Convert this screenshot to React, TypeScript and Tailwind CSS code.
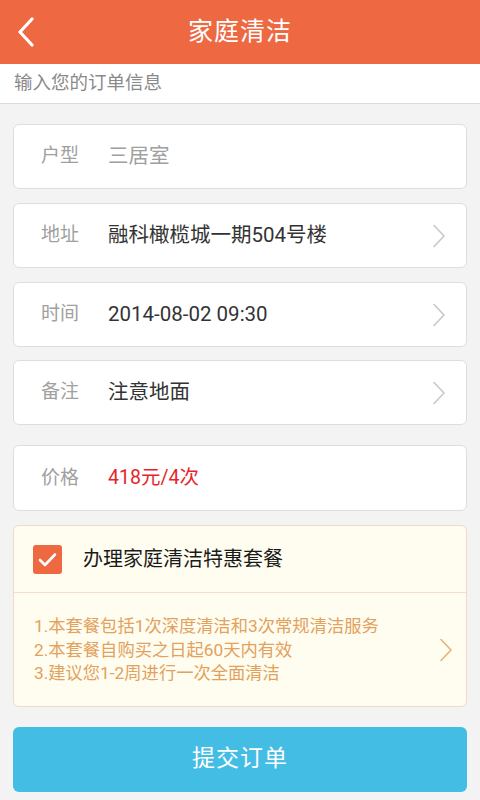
import React from "react";

const font = { fontFamily: 'Roboto, "Noto Sans CJK SC", "Noto Sans", sans-serif' };

function Chevron({ color = "#c8c8c8" }: { color?: string }) {
  return (
    <svg width="14" height="24" viewBox="0 0 14 24" fill="none">
      <polyline points="2,1.5 12,12 2,22.5" stroke={color} strokeWidth="1.6" strokeLinecap="round" strokeLinejoin="round" />
    </svg>
  );
}

type Row = { label: string; value: string; valueClass: string; arrow: boolean };

const rows: Row[] = [
  { label: "户型", value: "三居室", valueClass: "text-[#a0a0a0]", arrow: false },
  { label: "地址", value: "融科橄榄城一期504号楼", valueClass: "text-[#333333]", arrow: true },
  { label: "时间", value: "2014-08-02 09:30", valueClass: "text-[#333333]", arrow: true },
  { label: "备注", value: "注意地面", valueClass: "text-[#333333]", arrow: true },
];

function InfoCard({ row, className = "" }: { row: Row; className?: string }) {
  return (
    <div className={`flex items-center h-[65px] bg-white border border-[#dedede] rounded-[6px] pl-[27px] pr-[20px] ${className}`}>
      <span className="text-[19px] text-[#a0a0a0] w-[67px] shrink-0">{row.label}</span>
      <span className={`flex-1 text-[20.5px] ${row.valueClass}`}>{row.value}</span>
      {row.arrow && <Chevron />}
    </div>
  );
}

export default function App() {
  return (
    <div className="w-[480px] h-[800px] bg-[#f3f3f3] overflow-hidden flex flex-col" style={font}>
      {/* title bar */}
      <div className="relative h-[64px] bg-[#ee6842] flex items-center justify-center shrink-0">
        <svg className="absolute left-[16px] top-[17px]" width="20" height="30" viewBox="0 0 20 30" fill="none">
          <polyline points="16,2 4,15 16,28" stroke="white" strokeWidth="3.2" strokeLinecap="round" strokeLinejoin="round" />
        </svg>
        <span className="text-white text-[25px] tracking-[1px]">家庭清洁</span>
      </div>

      <div className="h-[40px] bg-white border-b border-[#dcdcdc] flex items-center px-[14px] shrink-0">
        <span className="text-[18.5px] text-[#8a8a8a]">输入您的订单信息</span>
      </div>

      <div className="flex flex-col px-[13px] pt-[20px]">
        <InfoCard row={rows[0]} />
        <InfoCard row={rows[1]} className="mt-[14px]" />
        <InfoCard row={rows[2]} className="mt-[14px]" />
        <InfoCard row={rows[3]} className="mt-[13px]" />

        <div className="flex items-center h-[66px] bg-white border border-[#dedede] rounded-[6px] pl-[27px] pr-[20px] mt-[20px]">
          <span className="text-[19px] text-[#a0a0a0] w-[67px] shrink-0">价格</span>
          <span className="text-[19.5px] text-[#e5252a]">418元/4次</span>
        </div>

        <div className="mt-[14px] bg-[#fffdf0] border border-[#f5d9c8] rounded-[6px] flex flex-col">
          <div className="h-[67px] flex items-center pl-[19px] border-b border-[#f5dcc8]">
            <div className="w-[29px] h-[29px] rounded-[3px] bg-[#ee6842] flex items-center justify-center">
              <svg width="19" height="15" viewBox="0 0 19 15" fill="none">
                <polyline points="2,8 7,13 17,2.5" stroke="white" strokeWidth="2.6" strokeLinecap="round" strokeLinejoin="round" />
              </svg>
            </div>
            <span className="ml-[21px] text-[20px] text-[#1a1a1a]">办理家庭清洁特惠套餐</span>
          </div>
          <div className="h-[113px] flex items-center pl-[20px] pr-[13px]">
            <div className="flex-1 flex flex-col text-[17.3px] leading-[23.5px] text-[#e3a15e] pt-[2px]">
              <span>1.本套餐包括1次深度清洁和3次常规清洁服务</span>
              <span>2.本套餐自购买之日起60天内有效</span>
              <span>3.建议您1-2周进行一次全面清洁</span>
            </div>
            <Chevron color="#e8b273" />
          </div>
        </div>

        <button className="mt-[20px] h-[65px] rounded-[6px] bg-[#44bde4] text-white text-[23px] tracking-[1px] flex items-center justify-center">
          提交订单
        </button>
      </div>
    </div>
  );
}
